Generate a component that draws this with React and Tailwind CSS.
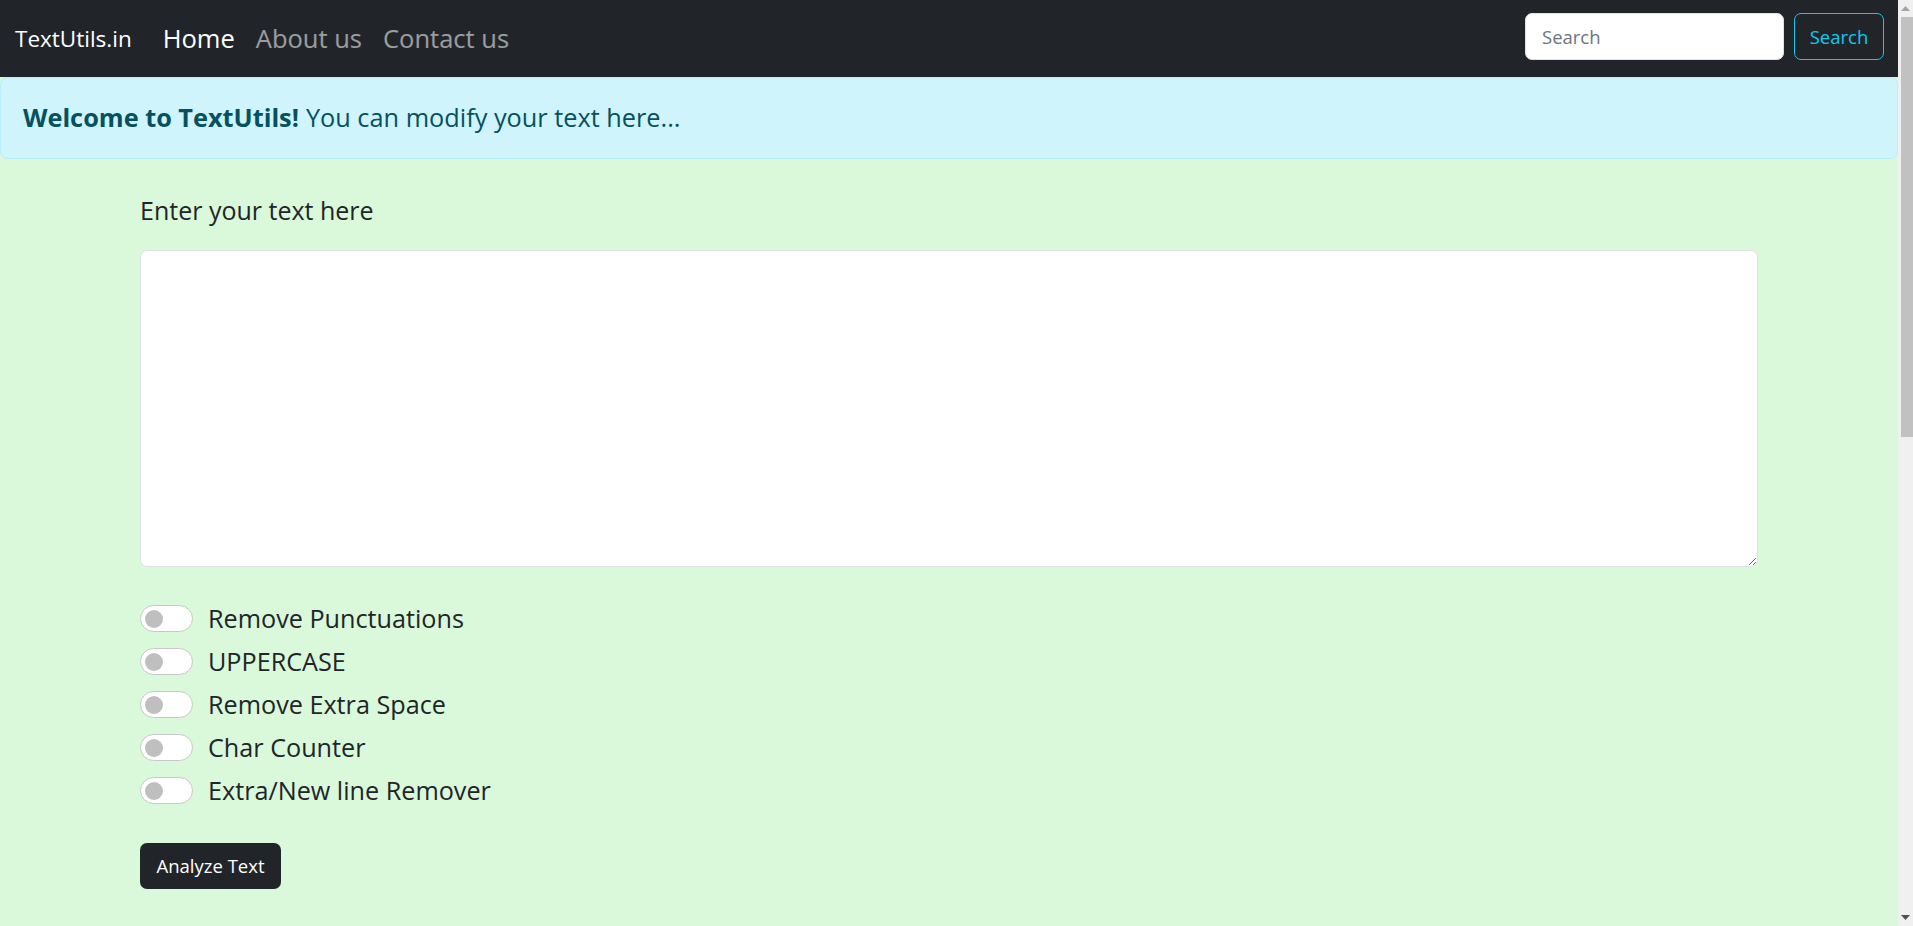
import React, { useState } from 'react';

const options = [
    'Remove Punctuations',
    'UPPERCASE',
    'Remove Extra Space',
    'Char Counter',
    'Extra/New line Remover',
];

const Toggle = ({ on, onClick }) => (
    <button
        type="button"
        onClick={onClick}
        className={`w-[53px] h-[27px] rounded-full border flex items-center px-[4px] shrink-0 ${on ? 'bg-[#0d6efd] border-[#0d6efd] justify-end' : 'bg-white border-[#c8c8c8] justify-start'}`}
    >
        <span className={`w-[18px] h-[18px] rounded-full ${on ? 'bg-white' : 'bg-[#bfbfbf]'}`}></span>
    </button>
);

const App = () => {
    const [text, setText] = useState('');
    const [checked, setChecked] = useState([false, false, false, false, false]);

    const flip = (i) => setChecked(checked.map((c, j) => (j === i ? !c : c)));

    return (
        <div className="flex h-screen w-full overflow-hidden font-['Open_Sans',sans-serif]">
            <div className="flex-1 min-w-0 flex flex-col bg-[#daf8da]">
                {/* navbar */}
                <nav className="h-[77px] shrink-0 bg-[#212529] flex items-center pl-[15px] pr-[14px]">
                    <a href="#" className="text-white text-[22.5px] mr-[31px]">TextUtils.in</a>
                    <ul className="flex gap-[21px] text-[25.5px]">
                        <li><a href="#" className="text-white">Home</a></li>
                        <li><a href="#" className="text-white/55">About us</a></li>
                        <li><a href="#" className="text-white/55">Contact us</a></li>
                    </ul>
                    <form className="ml-auto self-start mt-[13px] flex gap-[10px]" onSubmit={(e) => e.preventDefault()}>
                        <input
                            type="search"
                            placeholder="Search"
                            className="w-[259px] h-[47px] rounded-[7px] bg-white border border-[#dee2e6] px-[16px] text-[18.5px] text-[#212529] placeholder:text-[#6c757d] outline-none"
                        />
                        <button className="w-[90px] h-[47px] rounded-[7px] border border-[#0dcaf0] text-[#0dcaf0] text-[18.5px]">Search</button>
                    </form>
                </nav>

                {/* alert */}
                <div className="h-[82px] shrink-0 bg-[#cff4fc] border border-[#b6effb] rounded-[7px] text-[#055160] flex items-center pl-[22px] text-[25.3px]">
                    <strong className="font-bold">Welcome to TextUtils!</strong>
                    <span className="ml-[7px]">You can modify your text here...</span>
                </div>

                {/* form */}
                <div className="px-[140px] pt-[33px]">
                    <h1 className="text-[25px] leading-[36px] text-[#212529] mb-[22px]">Enter your text here</h1>
                    <textarea
                        value={text}
                        onChange={(e) => setText(e.target.value)}
                        className="block w-full h-[317px] bg-white border border-[#dee2e6] rounded-[7px] p-[10px] text-[19px] outline-none"
                    ></textarea>

                    <div className="mt-[30px] flex flex-col">
                        {options.map((label, i) => (
                            <div key={label} className="h-[43px] flex items-center gap-[15px]">
                                <Toggle on={checked[i]} onClick={() => flip(i)} />
                                <span className="text-[25.2px] text-[#212529]">{label}</span>
                            </div>
                        ))}
                    </div>

                    <button className="mt-[31px] w-[141px] h-[46px] rounded-[7px] bg-[#212529] text-white text-[18.5px]">Analyze Text</button>
                </div>
            </div>

            {/* scrollbar */}
            <div className="w-[15px] shrink-0 bg-[#f0f0f0] flex flex-col items-end">
                <div className="h-[17px] w-full flex items-center justify-center">
                    <svg width="9" height="5" viewBox="0 0 9 5"><path d="M0 5 L4.5 0 L9 5 Z" fill="#a3a3a3" /></svg>
                </div>
                <div className="w-[12px] h-[420px] bg-[#c1c1c1]"></div>
                <div className="flex-1"></div>
                <div className="h-[17px] w-full flex items-center justify-center">
                    <svg width="9" height="5" viewBox="0 0 9 5"><path d="M0 0 L4.5 5 L9 0 Z" fill="#505050" /></svg>
                </div>
            </div>
        </div>
    );
};

export default App;
